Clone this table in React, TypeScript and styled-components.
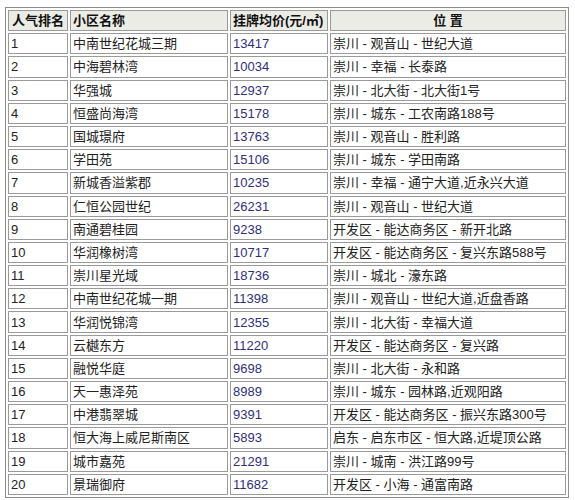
import React from "react";
import styled, { createGlobalStyle } from "styled-components";

const GlobalStyle = createGlobalStyle`
  html, body {
    margin: 0;
    padding: 0;
    background: #ffffff;
  }
  body {
    font-family: "Liberation Sans", "Noto Sans CJK SC", sans-serif;
  }
`;

const Page = styled.div`
  padding: 7px 0 0 5px;
`;

const Table = styled.table`
  table-layout: fixed;
  width: 561px;
  border-collapse: separate;
  border-spacing: 2px;
  border: 1px solid #8c8c8c;
  background: #ffffff;
  font-size: 13px;
  color: #222222;
`;

const HeadCell = styled.th<{ $center?: boolean; $width: number }>`
  width: ${({ $width }) => $width}px;
  height: 19.2px;
  padding: 0 2px;
  border: 1px solid #9a9a9a;
  background: #ecece7;
  font-weight: bold;
  text-align: ${({ $center }) => ($center ? "center" : "left")};
  white-space: nowrap;
  overflow: hidden;
  color: #111111;
  line-height: 19px;
`;

const Cell = styled.td<{ $price?: boolean }>`
  height: 19.2px;
  padding: 0 2px;
  border: 1px solid #9a9a9a;
  background: #ffffff;
  white-space: nowrap;
  overflow: hidden;
  line-height: 19px;
  color: ${({ $price }) => ($price ? "#2f2f7c" : "#222222")};
`;

type Row = [string, string, string, string];

const rows: Row[] = [
  ["1", "中南世纪花城三期", "13417", "崇川 - 观音山 - 世纪大道"],
  ["2", "中海碧林湾", "10034", "崇川 - 幸福 - 长泰路"],
  ["3", "华强城", "12937", "崇川 - 北大街 - 北大街1号"],
  ["4", "恒盛尚海湾", "15178", "崇川 - 城东 - 工农南路188号"],
  ["5", "国城璟府", "13763", "崇川 - 观音山 - 胜利路"],
  ["6", "学田苑", "15106", "崇川 - 城东 - 学田南路"],
  ["7", "新城香溢紫郡", "10235", "崇川 - 幸福 - 通宁大道,近永兴大道"],
  ["8", "仁恒公园世纪", "26231", "崇川 - 观音山 - 世纪大道"],
  ["9", "南通碧桂园", "9238", "开发区 - 能达商务区 - 新开北路"],
  ["10", "华润橡树湾", "10717", "开发区 - 能达商务区 - 复兴东路588号"],
  ["11", "崇川星光域", "18736", "崇川 - 城北 - 濠东路"],
  ["12", "中南世纪花城一期", "11398", "崇川 - 观音山 - 世纪大道,近盘香路"],
  ["13", "华润悦锦湾", "12355", "崇川 - 北大街 - 幸福大道"],
  ["14", "云樾东方", "11220", "开发区 - 能达商务区 - 复兴路"],
  ["15", "融悦华庭", "9698", "崇川 - 北大街 - 永和路"],
  ["16", "天一惠泽苑", "8989", "崇川 - 城东 - 园林路,近观阳路"],
  ["17", "中港翡翠城", "9391", "开发区 - 能达商务区 - 振兴东路300号"],
  ["18", "恒大海上威尼斯南区", "5893", "启东 - 启东市区 - 恒大路,近堤顶公路"],
  ["19", "城市嘉苑", "21291", "崇川 - 城南 - 洪江路99号"],
  ["20", "景瑞御府", "11682", "开发区 - 小海 - 通富南路"],
];

export default function App() {
  return (
    <Page>
      <GlobalStyle />
      <Table>
        <thead>
          <tr>
            <HeadCell $center $width={54}>人气排名</HeadCell>
            <HeadCell $width={152}>小区名称</HeadCell>
            <HeadCell $width={92}>挂牌均价(元/㎡)</HeadCell>
            <HeadCell $center $width={230}>位 置</HeadCell>
          </tr>
        </thead>
        <tbody>
          {rows.map((r) => (
            <tr key={r[0]}>
              <Cell>{r[0]}</Cell>
              <Cell>{r[1]}</Cell>
              <Cell $price>{r[2]}</Cell>
              <Cell>{r[3]}</Cell>
            </tr>
          ))}
        </tbody>
      </Table>
    </Page>
  );
}
